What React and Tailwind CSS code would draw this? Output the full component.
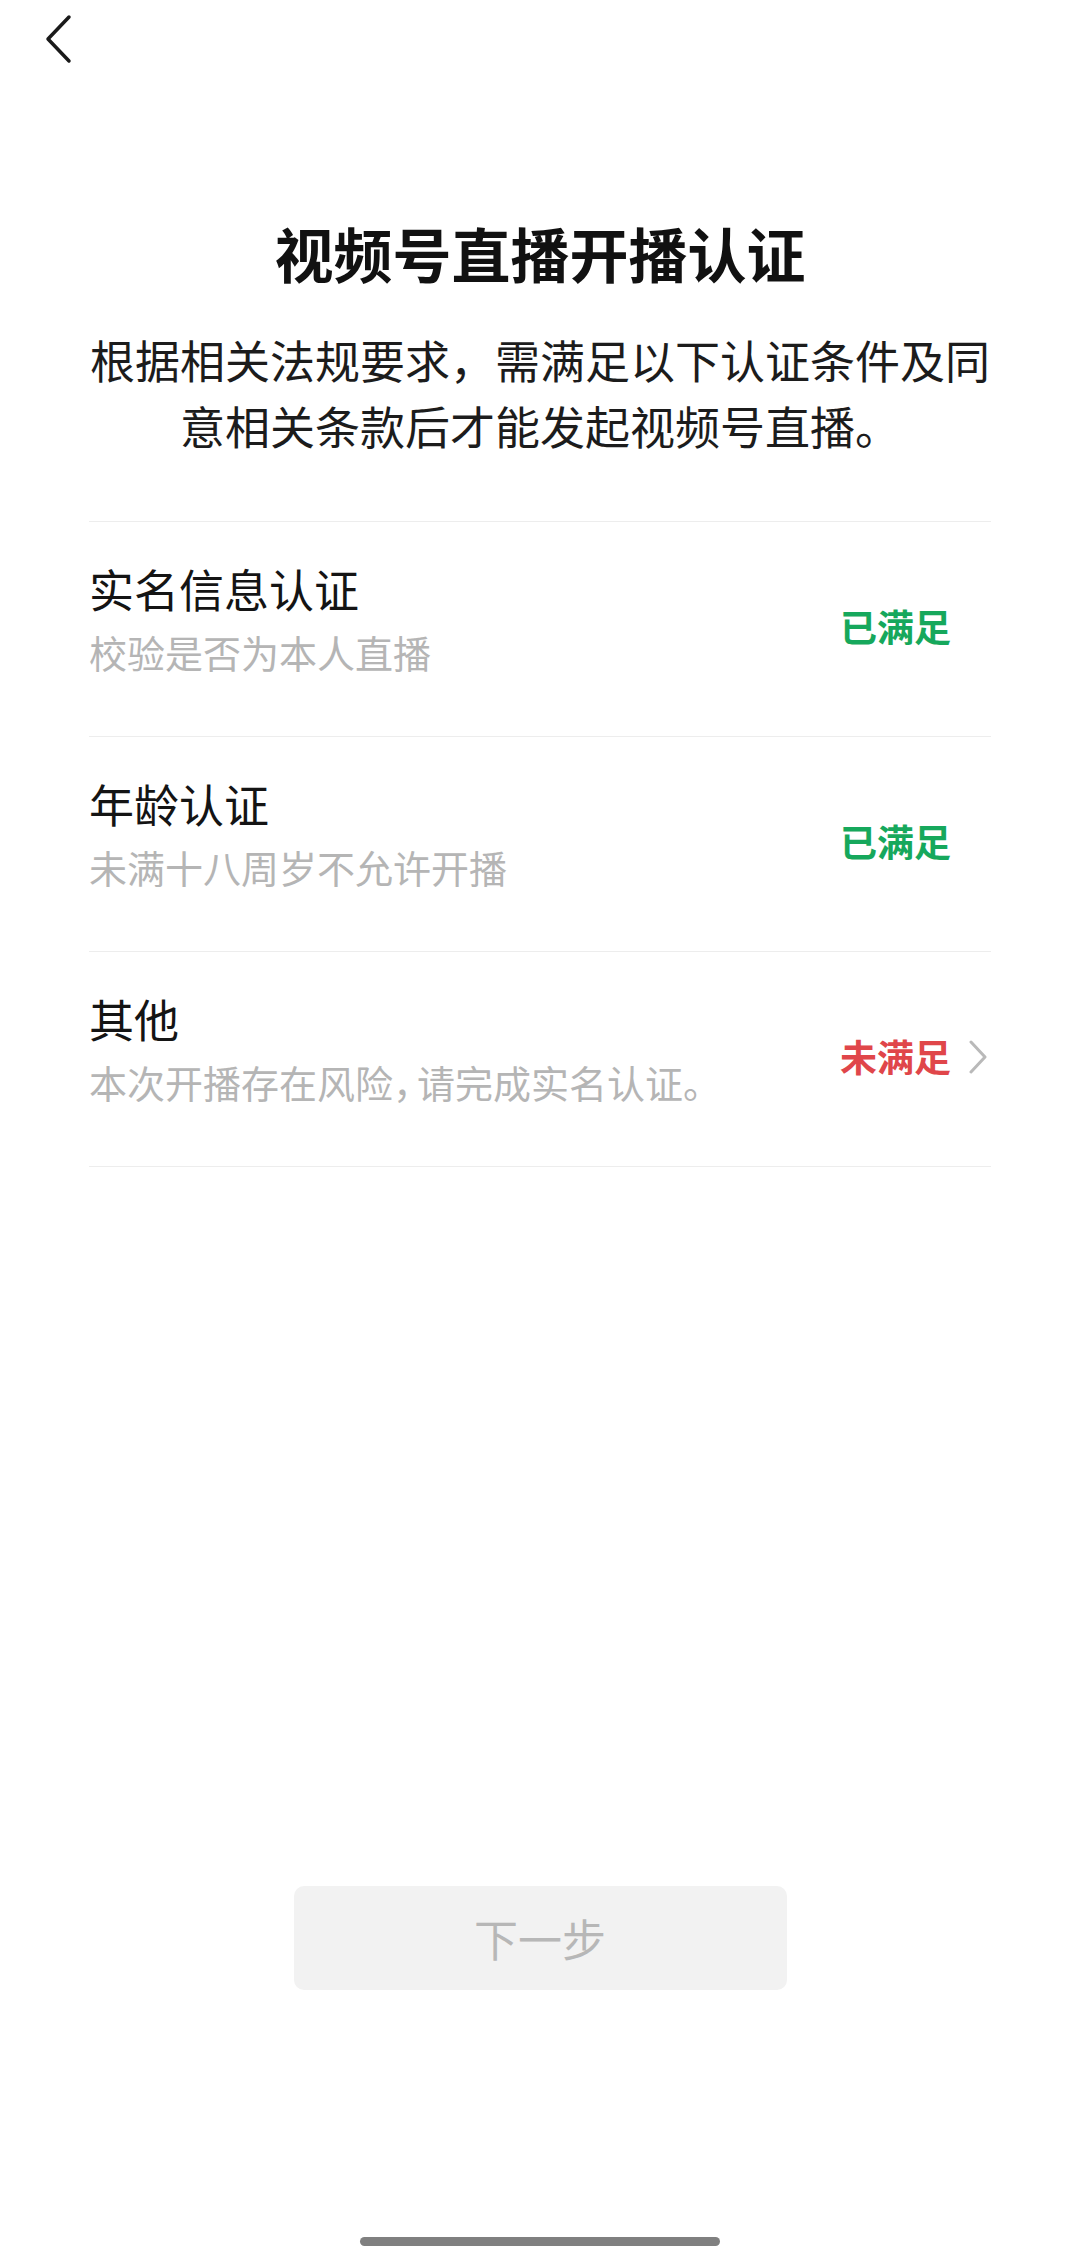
import React from 'react';

const rows = [
    { title: '实名信息认证', desc: '校验是否为本人直播', ok: true },
    { title: '年龄认证', desc: '未满十八周岁不允许开播', ok: true },
    {
        title: '其他',
        desc: (
            <>
                本次开播存在风险<span className="tracking-[-14px]">，</span>请完成实名认证。
            </>
        ),
        ok: false,
    },
];

const font = { fontFamily: '"Noto Sans CJK SC", "Noto Sans", sans-serif' };

const Row = ({ title, desc, ok }) => (
    <div className="flex items-center justify-between border-b border-[#ededed] pt-[37px] pb-[51px]">
        <div className="flex flex-col">
            <span className="text-[45px] leading-[60px] text-[#141414]">{title}</span>
            <span className="text-[38px] leading-[66px] text-[#b5b5b5]">{desc}</span>
        </div>
        <div className="flex items-center gap-[14px] mt-[10px]">
            <span className={`text-[37px] font-bold ${ok ? 'text-[#16a85c]' : 'text-[#e0464a]'}`}>
                {ok ? '已满足' : '未满足'}
            </span>
            <div className="w-[26px] flex justify-center">
                {!ok && (
                    <svg width="22" height="34" viewBox="0 0 22 34" fill="none">
                        <polyline points="4,2 18,17 4,32" stroke="#b9b9b9" strokeWidth="3" strokeLinecap="round" strokeLinejoin="round" />
                    </svg>
                )}
            </div>
        </div>
    </div>
);

const App = () => {
    return (
        <div className="w-[1080px] h-[2253px] bg-white flex flex-col" style={font}>
            {/* header */}
            <div className="h-[78px] flex items-center pl-[44px]">
                <svg width="30" height="50" viewBox="0 0 30 50" fill="none">
                    <polyline points="25,3 4,25 25,47" stroke="#1a1a1a" strokeWidth="3.5" strokeLinecap="round" strokeLinejoin="round" />
                </svg>
            </div>

            <h1 className="mt-[140px] text-center text-[59px] leading-[70px] font-bold text-[#111]">
                视频号直播开播认证
            </h1>
            <p className="mt-[39px] text-center text-[45px] leading-[66px] text-[#1c1c1c]">
                根据相关法规要求，需满足以下认证条件及同
                <br />
                意相关条款后才能发起视频号直播。
            </p>

            <div className="mt-[62px] mx-[89px] border-t border-[#ededed]">
                {rows.map((r) => (
                    <Row key={r.title} {...r} />
                ))}
            </div>

            <div className="mt-[719px] flex justify-center">
                <button className="w-[493px] h-[104px] rounded-[10px] bg-[#f2f2f2] text-[44px] text-[#b7b7b7]">
                    下一步
                </button>
            </div>

            <div className="mt-[247px] flex justify-center">
                <div className="w-[360px] h-[9px] rounded-full bg-[#808080]" />
            </div>
        </div>
    );
};

export default App;
